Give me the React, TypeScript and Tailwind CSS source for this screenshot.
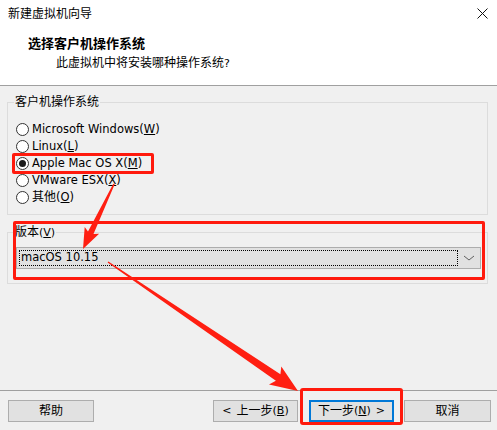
import type {ReactNode} from 'react'

type Pt = [number, number]

// Tapered callout arrow: thin tail, wider neck, barbed head
function arrowPoints(from: Pt, to: Pt, tailW: number, neckW: number, headW: number, headLen: number) {
    const dx = to[0] - from[0]
    const dy = to[1] - from[1]
    const len = Math.hypot(dx, dy)
    const ux = dx / len
    const uy = dy / len
    const nx = -uy
    const ny = ux
    const neck: Pt = [to[0] - ux * headLen, to[1] - uy * headLen]
    const barb: Pt = [to[0] - ux * headLen * 1.15, to[1] - uy * headLen * 1.15]
    const side = (base: Pt, w: number, s: number) =>
        `${(base[0] + nx * (w / 2) * s).toFixed(1)},${(base[1] + ny * (w / 2) * s).toFixed(1)}`
    return [
        side(from, tailW, 1),
        side(neck, neckW, 1),
        side(barb, headW, 1),
        `${to[0]},${to[1]}`,
        side(barb, headW, -1),
        side(neck, neckW, -1),
        side(from, tailW, -1),
    ].join(' ')
}

// CJK glyphs sit at 12px next to the 11px latin UI font
function Cn({children, className = ''}: { children: ReactNode; className?: string }) {
    return <span className={`text-[12px] ${className}`}>{children}</span>
}

function Radio({checked, children}: { checked?: boolean; children: ReactNode }) {
    return (
        <div className="flex h-[17px] items-center gap-[3px]">
            <span className="flex h-[13px] w-[13px] items-center justify-center rounded-full border border-[#333333] bg-white">
                {checked && <span className="h-[7px] w-[7px] rounded-full bg-[#1a1a1a]"/>}
            </span>
            <span className="text-[11.5px]">{children}</span>
        </div>
    )
}

function Btn({children, focused, className = ''}: { children: ReactNode; focused?: boolean; className?: string }) {
    return (
        <div
            className={`flex h-[22px] items-center justify-center bg-[#e1e1e1] ${focused ? 'border-2 border-[#0078d7]' : 'border border-[#adadad]'} ${className}`}
        >
            {children}
        </div>
    )
}

export default function App() {
    return (
        <div
            className="relative flex h-[430px] w-[497px] flex-col overflow-hidden bg-[#f0f0f0] text-[11px] text-black"
            style={{fontFamily: '"DejaVu Sans", "Noto Sans CJK SC", sans-serif'}}
        >
            {/* Header */}
            <div className="h-[86px] border-b border-[#a0a0a0] bg-white">
                <div className="flex h-[28px] items-center justify-between pl-[8px] pr-[9px]">
                    <Cn>新建虚拟机向导</Cn>
                    <svg width="11" height="11" viewBox="0 0 11 11" className="mt-[-1px]">
                        <path d="M0.5 0.5 L10.5 10.5 M10.5 0.5 L0.5 10.5" stroke="#111" strokeWidth="1"/>
                    </svg>
                </div>
                <div className="mt-[8px] pl-[28px] text-[13px] font-bold leading-[16px]">选择客户机操作系统</div>
                <div className="mt-[3px] pl-[56px] leading-[16px]"><Cn>此虚拟机中将安装哪种操作系统</Cn>?</div>
            </div>

            {/* Body */}
            <div className="flex-1 pl-[7px] pr-[9px] pt-[16px]">
                <div className="relative h-[113px] border border-[#dcdcdc] pl-[8px] pt-[18px]">
                    <span className="absolute left-[6px] top-[-9px] bg-[#f0f0f0] px-[1px] leading-[16px]"><Cn>客户机操作系统</Cn></span>
                    <Radio>Microsoft Windows(<u>W</u>)</Radio>
                    <Radio>Linux(<u>L</u>)</Radio>
                    <Radio checked>Apple Mac OS X(<u>M</u>)</Radio>
                    <Radio>VMware ESX(<u>X</u>)</Radio>
                    <Radio><Cn>其他</Cn>(<u>O</u>)</Radio>
                </div>

                <div className="relative mt-[17px] h-[52px] border border-[#dcdcdc] pl-[8px] pr-[6px] pt-[14px]">
                    <span className="absolute left-[6px] top-[-9px] bg-[#f0f0f0] px-[1px] leading-[16px]"><Cn>版本</Cn>(<u>V</u>)</span>
                    <div className="flex h-[22px] items-center border border-[#adadad] bg-[#e1e1e1] pl-[2px] pr-[4px]">
                        <div className="flex h-[16px] flex-1 items-center border border-dotted border-black pl-[1px] text-[11.5px]">
                            macOS 10.15
                        </div>
                        <svg width="14" height="8" viewBox="0 0 14 8" className="ml-[4px]">
                            <path d="M2 2 L7 6 L12 2" stroke="#606060" strokeWidth="1" fill="none"/>
                        </svg>
                    </div>
                </div>
            </div>

            {/* Footer buttons */}
            <div className="flex h-[40px] border-t border-[#a0a0a0] pl-[8px] pt-[9px]">
                <Btn className="w-[86px]"><Cn>帮助</Cn></Btn>
                <Btn className="ml-[119px] w-[85px]">&lt;<Cn className="ml-[5px]">上一步</Cn>(<u>B</u>)</Btn>
                <Btn focused className="ml-[11px] w-[85px]"><Cn>下一步</Cn>(<u>N</u>)<span className="ml-[5px]">&gt;</span></Btn>
                <Btn className="ml-[10px] w-[87px]"><Cn>取消</Cn></Btn>
            </div>

            {/* Red callout boxes */}
            <div className="absolute left-[12px] top-[153px] h-[21px] w-[142px] rounded-[2px] border-[3px] border-[#ff1a0d]"/>
            <div className="absolute left-[13px] top-[221px] h-[59px] w-[472px] rounded-[2px] border-[3px] border-[#ff1a0d]"/>
            <div className="absolute left-[300px] top-[388px] h-[37px] w-[103px] rounded-[3px] border-[3px] border-[#ff1a0d]"/>

            {/* Red arrows */}
            <svg className="pointer-events-none absolute left-0 top-0" width="497" height="430">
                <polygon points={arrowPoints([114, 184], [83, 249], 1.5, 6, 16, 18)} fill="#ff1f12"/>
                <polygon points={arrowPoints([108, 262], [298, 391], 1.5, 8, 22, 24)} fill="#ff1f12"/>
            </svg>
        </div>
    )
}
